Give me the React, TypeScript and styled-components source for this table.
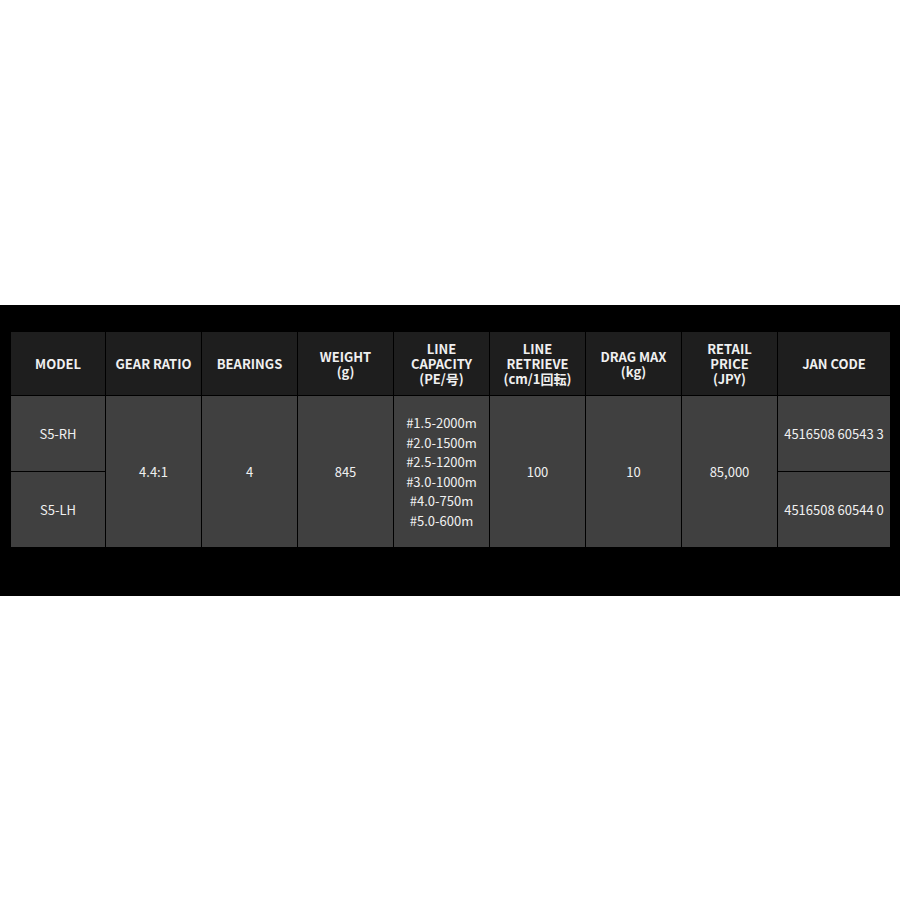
import * as React from 'react';
import { createGlobalStyle, styled } from 'styled-components';

const GlobalStyle = createGlobalStyle`
  html, body {
    margin: 0;
    padding: 0;
    background: #fff;
  }
`;

const Page = styled.div`
  padding-top: 305px;
  height: 900px;
  box-sizing: border-box;
`;

const Band = styled.section`
  background: #000;
  padding: 26px 10px 48px;
`;

const Table = styled.table`
  width: 880px;
  border-collapse: collapse;
  table-layout: fixed;
  font-family: 'Noto Sans CJK JP', 'Noto Sans', sans-serif;
  color: #f0f0f0;
  text-align: center;
`;

const Th = styled.th`
  background: #1e1e1e;
  border: 1px solid #000;
  height: 63px;
  padding: 0 2px;
  font-size: 13px;
  font-weight: 700;
  line-height: 15px;
  vertical-align: middle;
`;

const Td = styled.td`
  background: #404040;
  border: 1px solid #000;
  height: 75px;
  padding: 0 2px;
  font-size: 13px;
  font-weight: 400;
  line-height: 19.5px;
  vertical-align: middle;
  white-space: nowrap;
`;

const widths = [95, 96, 96, 96, 96, 96, 96, 96, 113];

const headers: string[][] = [
  ['MODEL'],
  ['GEAR RATIO'],
  ['BEARINGS'],
  ['WEIGHT', '(g)'],
  ['LINE', 'CAPACITY', '(PE/号)'],
  ['LINE', 'RETRIEVE', '(cm/1回転)'],
  ['DRAG MAX', '(kg)'],
  ['RETAIL', 'PRICE', '(JPY)'],
  ['JAN CODE'],
];

const capacity = ['#1.5-2000m', '#2.0-1500m', '#2.5-1200m', '#3.0-1000m', '#4.0-750m', '#5.0-600m'];

const Lines: React.FC<{ items: string[] }> = ({ items }) => (
  <>
    {items.map((t, i) => (
      <React.Fragment key={t}>
        {i > 0 && <br />}
        {t}
      </React.Fragment>
    ))}
  </>
);

export default function App() {
  return (
    <Page>
      <GlobalStyle />
      <Band>
        <Table>
          <colgroup>
            {widths.map((w, i) => (
              <col key={i} style={{ width: w }} />
            ))}
          </colgroup>
          <thead>
            <tr>
              {headers.map((h) => (
                <Th key={h.join(' ')}>
                  <Lines items={h} />
                </Th>
              ))}
            </tr>
          </thead>
          <tbody>
            <tr>
              <Td>S5-RH</Td>
              <Td rowSpan={2}>4.4:1</Td>
              <Td rowSpan={2}>4</Td>
              <Td rowSpan={2}>845</Td>
              <Td rowSpan={2}>
                <Lines items={capacity} />
              </Td>
              <Td rowSpan={2}>100</Td>
              <Td rowSpan={2}>10</Td>
              <Td rowSpan={2}>85,000</Td>
              <Td>4516508 60543 3</Td>
            </tr>
            <tr>
              <Td>S5-LH</Td>
              <Td>4516508 60544 0</Td>
            </tr>
          </tbody>
        </Table>
      </Band>
    </Page>
  );
}
